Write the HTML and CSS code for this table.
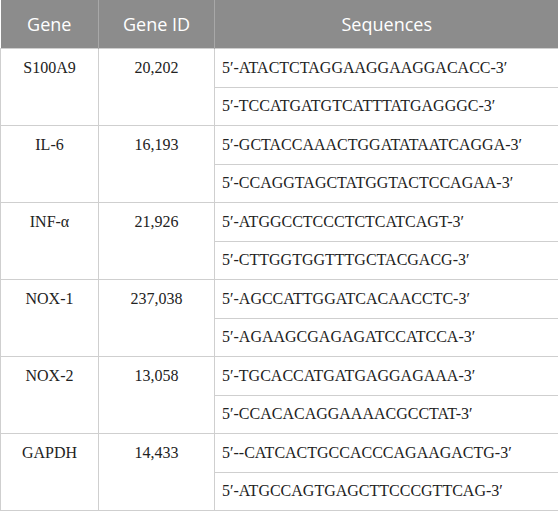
FILE: index.html
```html
<!DOCTYPE html>
<html>
<head>
<meta charset="utf-8">
<link rel="stylesheet" href="styles.css">
</head>
<body>
<table class="primers">
  <colgroup>
    <col class="c-gene">
    <col class="c-id">
    <col class="c-seq">
  </colgroup>
  <thead>
    <tr>
      <th>Gene</th>
      <th>Gene ID</th>
      <th>Sequences</th>
    </tr>
  </thead>
  <tbody>
    <tr><td class="ctr" rowspan="2">S100A9</td><td class="ctr" rowspan="2">20,202</td><td>5′-ATACTCTAGGAAGGAAGGACACC-3′</td></tr>
    <tr><td>5′-TCCATGATGTCATTTATGAGGGC-3′</td></tr>
    <tr><td class="ctr" rowspan="2">IL-6</td><td class="ctr" rowspan="2">16,193</td><td>5′-GCTACCAAACTGGATATAATCAGGA-3′</td></tr>
    <tr><td>5′-CCAGGTAGCTATGGTACTCCAGAA-3′</td></tr>
    <tr><td class="ctr" rowspan="2">INF-α</td><td class="ctr" rowspan="2">21,926</td><td>5′-ATGGCCTCCCTCTCATCAGT-3′</td></tr>
    <tr><td>5′-CTTGGTGGTTTGCTACGACG-3′</td></tr>
    <tr><td class="ctr" rowspan="2">NOX-1</td><td class="ctr" rowspan="2">237,038</td><td>5′-AGCCATTGGATCACAACCTC-3′</td></tr>
    <tr><td>5′-AGAAGCGAGAGATCCATCCA-3′</td></tr>
    <tr><td class="ctr" rowspan="2">NOX-2</td><td class="ctr" rowspan="2">13,058</td><td>5′-TGCACCATGATGAGGAGAAA-3′</td></tr>
    <tr><td>5′-CCACACAGGAAAACGCCTAT-3′</td></tr>
    <tr><td class="ctr" rowspan="2">GAPDH</td><td class="ctr" rowspan="2">14,433</td><td>5′--CATCACTGCCACCCAGAAGACTG-3′</td></tr>
    <tr><td>5′-ATGCCAGTGAGCTTCCCGTTCAG-3′</td></tr>
  </tbody>
</table>
</body>
</html>
```

FILE: styles.css
```css
html, body {
  margin: 0;
  padding: 0;
  background: #ffffff;
}

.primers {
  width: 558px;
  border-collapse: collapse;
  table-layout: fixed;
  font-family: "Liberation Serif", "Times New Roman", serif;
  font-size: 16px;
  color: #222222;
}

.c-gene { width: 98px; }
.c-id { width: 116px; }
.c-seq { width: 344px; }

.primers th {
  height: 48px;
  padding: 0;
  background: #8c8c8c;
  color: #ffffff;
  font-family: "Open Sans", "Noto Sans", sans-serif;
  font-weight: 400;
  font-size: 18px;
  line-height: 20px;
  text-align: center;
  vertical-align: middle;
  border-left: 1px solid #a8a8a8;
}

.primers th:first-child {
  border-left: none;
}

.primers td {
  height: 37.5px;
  padding: 0 0 0 7px;
  line-height: 18px;
  border: 1px solid #cfcfcf;
  vertical-align: middle;
  text-align: left;
  white-space: nowrap;
}

.primers td.ctr {
  padding: 10px 0 0 0;
  text-align: center;
  vertical-align: top;
}
```
